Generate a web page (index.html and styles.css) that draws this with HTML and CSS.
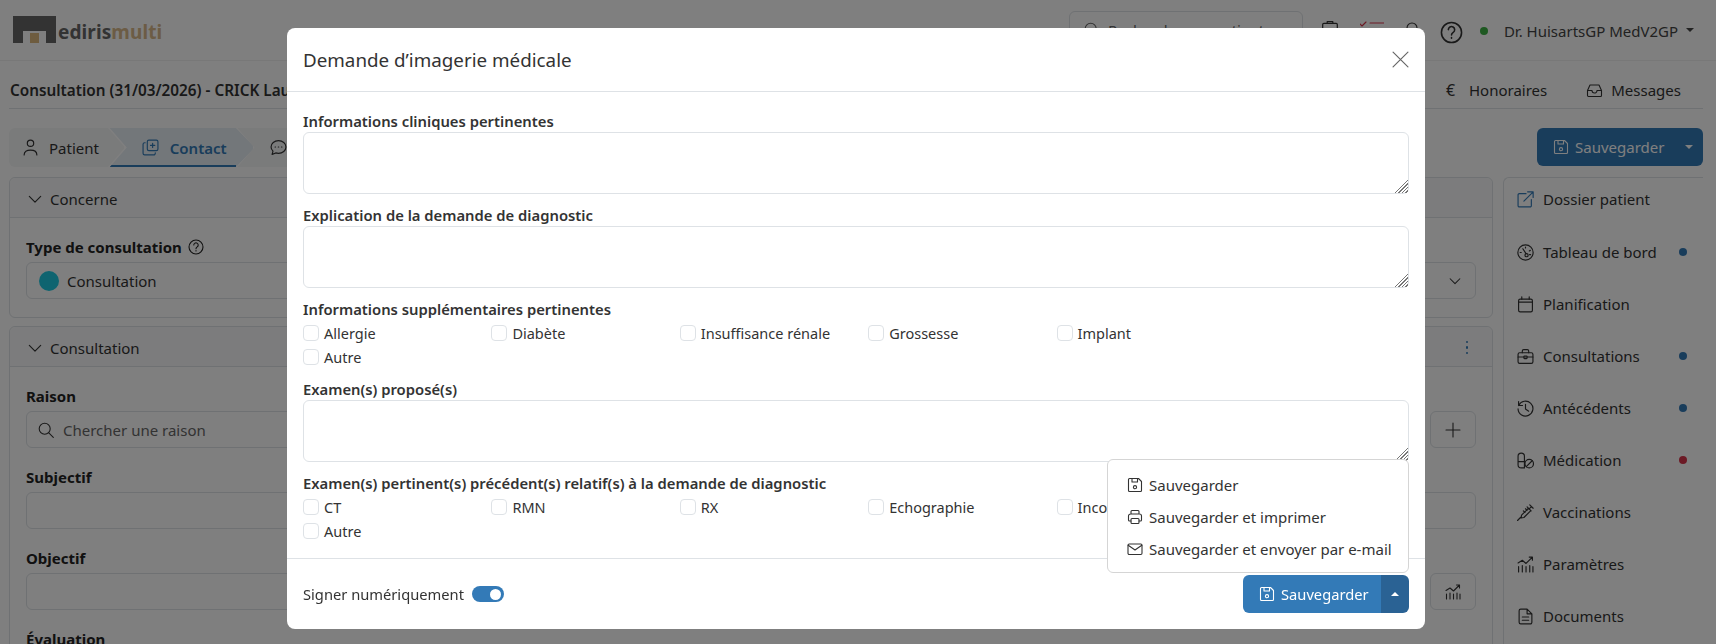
FILE: index.html
```html
<!DOCTYPE html>
<html lang="fr">
  <head>
    <meta charset="UTF-8" />
    <title>Demande d'imagerie médicale</title>
    <link rel="stylesheet" href="styles.css" />
  </head>
  <body>
    <svg class="sprite" xmlns="http://www.w3.org/2000/svg">
      <symbol id="i-save" viewBox="0 0 16 16"><path d="M2.5 1.5h9l3 3v9a1 1 0 0 1-1 1h-11a1 1 0 0 1-1-1v-11a1 1 0 0 1 1-1zM5 1.5V5h5.500V1.500"/><circle cx="8" cy="10.200" r="1.600"/></symbol>
      <symbol id="i-print" viewBox="0 0 16 16"><path d="M4 5V2.500a1 1 0 0 1 1-1h6a1 1 0 0 1 1 1V5M4 12H2.500a1 1 0 0 1-1-1V7a2 2 0 0 1 2-2h9a2 2 0 0 1 2 2v4a1 1 0 0 1-1 1H12"/><rect x="4" y="9.500" width="8" height="5" rx="1"/></symbol>
      <symbol id="i-mail" viewBox="0 0 16 16"><rect x="1" y="3" width="14" height="10.500" rx="1.200"/><path d="M1.200 4.200 8 9l6.800-4.800"/></symbol>
      <symbol id="i-person" viewBox="0 0 16 16"><circle cx="8" cy="4" r="3"/><path d="M2 15c0-3 2.500-4.600 6-4.600s6 1.600 6 4.600"/></symbol>
      <symbol id="i-contact" viewBox="0 0 16 16"><rect x="5" y="1" width="10" height="10" rx="1.500"/><path d="M3 3.500H2.500A1.500 1.500 0 0 0 1 5v8.500A1.500 1.500 0 0 0 2.500 15H11a1.500 1.500 0 0 0 1.500-1.500V13M10 4v4M8 6h4"/></symbol>
      <symbol id="i-chat" viewBox="0 0 16 16"><path d="M8 1.500c3.900 0 7 2.700 7 6s-3.100 6-7 6c-.9 0-1.800-.1-2.600-.4L2 14.500l.8-3.100C1.700 10.300 1 9 1 7.500c0-3.300 3.100-6 7-6z"/><path d="M4.800 7.500h.4M7.800 7.500h.4M10.800 7.500h.4"/></symbol>
      <symbol id="i-chev" viewBox="0 0 16 16"><path d="M1.500 5 8 11.500 14.500 5"/></symbol>
      <symbol id="i-help" viewBox="0 0 16 16"><circle cx="8" cy="8" r="7"/><path d="M5.800 6a2.200 2.200 0 1 1 3.400 1.900C8.400 8.400 8 8.800 8 9.700M8 11.500v.5"/></symbol>
      <symbol id="i-search" viewBox="0 0 16 16"><circle cx="6.700" cy="6.700" r="5.500"/><path d="m10.800 10.800 4.500 4.500"/></symbol>
      <symbol id="i-x" viewBox="0 0 16 16"><path d="m1 1 14 14M15 1 1 15"/></symbol>
      <symbol id="i-plus" viewBox="0 0 16 16"><path d="M8 1v14M1 8h14"/></symbol>
      <symbol id="i-link" viewBox="0 0 16 16"><path d="M8.500 2.500H2.200A1.200 1.200 0 0 0 1 3.700v10.100A1.200 1.200 0 0 0 2.200 15h10.100a1.200 1.200 0 0 0 1.200-1.200V8M10 .8h5.200V6M15 1 6.500 9.500"/></symbol>
      <symbol id="i-gauge" viewBox="0 0 16 16"><circle cx="8" cy="8" r="7.200"/><circle cx="9" cy="10.500" r="1.500"/><path d="M8.500 9 5.500 4.500M3 8h1M8 2.800v1M12.500 6l-.9.500M12.800 10h-1"/></symbol>
      <symbol id="i-cal" viewBox="0 0 16 16"><rect x="1.500" y="3" width="13" height="12" rx="1.500"/><path d="M1.500 5.800h13M4.500 .8V3M11.500 .8V3"/></symbol>
      <symbol id="i-case" viewBox="0 0 16 16"><rect x="1" y="4.500" width="14" height="10" rx="1.500"/><path d="M5 4.500V2.800A1.300 1.300 0 0 1 6.300 1.500h3.400A1.300 1.300 0 0 1 11 2.800v1.700M1 8.500h14"/><rect x="6.500" y="7.500" width="3" height="2.500" rx=".5"/></symbol>
      <symbol id="i-history" viewBox="0 0 16 16"><path d="M1.500 1.500v3.700h3.700M1.600 5.200a7 7 0 1 1-.6 3.200M8 4v4.500l3 2"/></symbol>
      <symbol id="i-pill" viewBox="0 0 16 16"><path d="M7 14.500V4a3 3 0 0 0-6 0v8a3 3 0 0 0 3 3h3M1 9h6"/><circle cx="11.500" cy="11" r="4"/><path d="m8.700 13.800 5.600-5.600"/></symbol>
      <symbol id="i-syringe" viewBox="0 0 16 16"><path d="m.5 15.500 3-3M12 .8l3.200 3.200M13.600 2.400l-2.400 2.400M9.500 2.700l3.800 3.800M10.800 4 4.300 10.500l-.5 2.700 2.700-.5L13 6.200M6 6.500l1.500 1.500M8 4.500 9.500 6"/></symbol>
      <symbol id="i-chart" viewBox="0 0 16 16"><path d="M1.500 15V10M5 15V9M8.500 15v-5M12 15V9M15 15v-5M1 6.500 5 4l3.500 3L14.500 1M11.500 1h3v3"/></symbol>
      <symbol id="i-doc" viewBox="0 0 16 16"><path d="M9.500 1H3.500A1.500 1.500 0 0 0 2 2.500v11A1.500 1.500 0 0 0 3.500 15h9a1.500 1.500 0 0 0 1.500-1.500V5.500zM9.500 1v4.500H14M5 8.500h6M5 11.500h6"/></symbol>
      <symbol id="i-inbox" viewBox="0 0 16 16"><path d="M1 8.500 3.500 3h9L15 8.500v5a1 1 0 0 1-1 1H2a1 1 0 0 1-1-1zM1 8.500h4.500a2.500 2.500 0 0 0 5 0H15"/></symbol>
      <symbol id="i-clip" viewBox="0 0 16 16"><rect x="1.500" y="3" width="13" height="12.500" rx="1"/><path d="M5.500 3V1.500h5V3"/></symbol>
      <symbol id="i-bell" viewBox="0 0 16 16"><path d="M3 12V7a5 5 0 0 1 10 0v5l1.500 1.500h-13zM6.500 15h3"/></symbol>
    </svg>

    <!-- page behind the modal -->
    <header class="topbar">
      <div class="logo">
        <svg class="logo-mark" viewBox="0 0 43 27"><path class="mark-dark" d="M0 0h43v27H33V15H10v12H0z"/><rect class="mark-brown" x="17" y="17" width="9" height="10"/></svg>
        <span class="logo-text">ediris<span class="logo-multi">multi</span></span>
      </div>
      <div class="top-right">
        <div class="search-top"><svg class="ic"><use href="#i-search"/></svg><span>Rechercher un patient</span></div>
        <svg class="ic top-clip"><use href="#i-clip"/></svg>
        <svg class="ic top-checks" viewBox="0 0 24 8"><path d="M0 3l2 2 4-4M10 2h14"/></svg>
        <svg class="ic top-bell"><use href="#i-bell"/></svg>
        <svg class="ic help-top"><use href="#i-help"/></svg>
        <span class="status"></span>
        <span class="user">Dr. HuisartsGP MedV2GP</span>
        <span class="caret"></span>
      </div>
    </header>

    <main class="page">
      <div class="title-row">
        <h2>Consultation (31/03/2026) - CRICK Laurence</h2>
        <div class="title-links">
          <span class="t-link"><span class="euro">€</span>Honoraires</span>
          <span class="t-link"><svg class="ic"><use href="#i-inbox"/></svg>Messages</span>
        </div>
      </div>

      <div class="tab-row">
        <div class="tabs">
          <span class="tab first-tab"><svg class="ic"><use href="#i-person"/></svg>Patient</span>
          <span class="tab active"><svg class="ic"><use href="#i-contact"/></svg>Contact</span>
          <span class="tab third"><svg class="ic"><use href="#i-chat"/></svg>Notes</span>
        </div>
        <div class="save-back">
          <span class="save-main"><svg class="ic"><use href="#i-save"/></svg>Sauvegarder</span>
          <span class="caret"></span>
        </div>
      </div>

      <div class="columns">
        <div class="left">
          <section class="panel">
            <div class="panel-head"><svg class="ic chev"><use href="#i-chev"/></svg>Concerne</div>
            <div class="panel-body first">
              <div class="lbl">Type de consultation <svg class="ic help-sm"><use href="#i-help"/></svg></div>
              <div class="box select-box"><span class="teal"></span>Consultation<svg class="ic chev end"><use href="#i-chev"/></svg></div>
            </div>
          </section>

          <section class="panel">
            <div class="panel-head"><svg class="ic chev"><use href="#i-chev"/></svg>Consultation<span class="more"><i></i><i></i><i></i></span></div>
            <div class="panel-body">
              <div class="lbl">Raison</div>
              <div class="line">
                <div class="box grow"><svg class="ic mag"><use href="#i-search"/></svg><span class="ph">Chercher une raison</span></div>
                <span class="square"><svg class="ic"><use href="#i-plus"/></svg></span>
              </div>
              <div class="lbl">Subjectif</div>
              <div class="line"><div class="box grow"></div></div>
              <div class="lbl">Objectif</div>
              <div class="line">
                <div class="box grow"></div>
                <span class="square"><svg class="ic"><use href="#i-chart"/></svg></span>
              </div>
              <div class="lbl">Évaluation</div>
            </div>
          </section>
        </div>

        <nav class="side">
          <div class="side-item"><svg class="ic link-ic"><use href="#i-link"/></svg>Dossier patient</div>
          <div class="side-item"><svg class="ic"><use href="#i-gauge"/></svg>Tableau de bord<span class="dot"></span></div>
          <div class="side-item"><svg class="ic"><use href="#i-cal"/></svg>Planification</div>
          <div class="side-item"><svg class="ic"><use href="#i-case"/></svg>Consultations<span class="dot"></span></div>
          <div class="side-item"><svg class="ic"><use href="#i-history"/></svg>Antécédents<span class="dot"></span></div>
          <div class="side-item"><svg class="ic"><use href="#i-pill"/></svg>Médication<span class="dot red"></span></div>
          <div class="side-item"><svg class="ic"><use href="#i-syringe"/></svg>Vaccinations</div>
          <div class="side-item"><svg class="ic"><use href="#i-chart"/></svg>Paramètres</div>
          <div class="side-item"><svg class="ic"><use href="#i-doc"/></svg>Documents</div>
        </nav>
      </div>
    </main>

    <!-- modal -->
    <div class="backdrop">
      <div class="modal">
        <div class="modal-head">
          <h3>Demande d’imagerie médicale</h3>
          <svg class="ic close"><use href="#i-x"/></svg>
        </div>

        <form class="modal-body">
          <label class="f-label">Informations cliniques pertinentes</label>
          <textarea></textarea>

          <label class="f-label">Explication de la demande de diagnostic</label>
          <textarea></textarea>

          <label class="f-label">Informations supplémentaires pertinentes</label>
          <div class="checks-grid">
            <label class="chk"><input type="checkbox" />Allergie</label>
            <label class="chk"><input type="checkbox" />Diabète</label>
            <label class="chk"><input type="checkbox" />Insuffisance rénale</label>
            <label class="chk"><input type="checkbox" />Grossesse</label>
            <label class="chk"><input type="checkbox" />Implant</label>
            <label class="chk"><input type="checkbox" />Autre</label>
          </div>

          <label class="f-label">Examen(s) proposé(s)</label>
          <textarea></textarea>

          <label class="f-label">Examen(s) pertinent(s) précédent(s) relatif(s) à la demande de diagnostic</label>
          <div class="checks-grid">
            <label class="chk"><input type="checkbox" />CT</label>
            <label class="chk"><input type="checkbox" />RMN</label>
            <label class="chk"><input type="checkbox" />RX</label>
            <label class="chk"><input type="checkbox" />Echographie</label>
            <label class="chk"><input type="checkbox" />Inconnu</label>
            <label class="chk"><input type="checkbox" />Autre</label>
          </div>
        </form>

        <div class="modal-foot">
          <div class="sign">Signer numériquement <span class="switch"></span></div>
          <div class="split-btn">
            <span class="split-main"><svg class="ic"><use href="#i-save"/></svg>Sauvegarder</span>
            <span class="split-toggle"><span class="caret up"></span></span>
          </div>
          <ul class="menu">
            <li><svg class="ic"><use href="#i-save"/></svg>Sauvegarder</li>
            <li><svg class="ic"><use href="#i-print"/></svg>Sauvegarder et imprimer</li>
            <li><svg class="ic"><use href="#i-mail"/></svg>Sauvegarder et envoyer par e-mail</li>
          </ul>
        </div>
      </div>
    </div>
  </body>
</html>
```

FILE: styles.css
```css
* {
  margin: 0;
  padding: 0;
  box-sizing: border-box;
}

html,
body {
  height: 100%;
  overflow: hidden;
}

body {
  background-color: #fff;
  color: #333;
  font-family: "Noto Sans", sans-serif;
  font-size: 15px;
  line-height: 22px;
}

.sprite {
  display: none;
}

.ic {
  width: 16px;
  height: 16px;
  flex: none;
  fill: none;
  stroke: currentColor;
  stroke-width: 1.1;
  stroke-linecap: round;
  stroke-linejoin: round;
}

.caret {
  width: 0;
  height: 0;
  border-left: 4px solid transparent;
  border-right: 4px solid transparent;
  border-top: 4px solid currentColor;
}

.caret.up {
  border-top: 0;
  border-bottom: 4px solid currentColor;
}

/* top bar */
.topbar {
  height: 61px;
  display: flex;
  justify-content: space-between;
  padding: 11px 22px 0 13px;
  border-bottom: 1px solid #f0f0f0;
}

.logo {
  display: flex;
  align-items: flex-end;
  height: 27px;
  margin-top: 5px;
}

.logo-mark {
  width: 43px;
  height: 27px;
}

.mark-dark {
  fill: #666;
}

.mark-brown {
  fill: #dcb87e;
}

.logo-text {
  margin-left: 2px;
  font-size: 19px;
  line-height: 22px;
  font-weight: 700;
  letter-spacing: 0.1px;
  color: #666;
}

.logo-multi {
  color: #d8b88a;
}

.top-right {
  display: flex;
  align-items: flex-start;
}

.search-top {
  width: 234px;
  height: 38px;
  display: flex;
  align-items: center;
  gap: 8px;
  padding-left: 14px;
  border: 1px solid #dee2e6;
  border-radius: 6px;
  color: #666;
}

.top-clip {
  width: 18px;
  height: 18px;
  margin: 9px 0 0 18px;
}

.top-checks {
  width: 24px;
  height: 8px;
  margin: 10px 0 0 21px;
  color: #d9344a;
}

.top-bell {
  height: 18px;
  margin: 9px 0 0 20px;
}

.help-top {
  width: 23px;
  height: 23px;
  margin: 10px 0 0 20px;
}

.status {
  width: 8px;
  height: 8px;
  margin: 16px 0 0 17px;
  border-radius: 50%;
  background-color: #3cb043;
}

.user {
  margin: 9px 0 0 16px;
  color: #444;
}

.top-right > .caret {
  margin: 17px 0 0 8px;
  color: #444;
}

/* page */
.page {
  padding: 0 13px 0 9px;
}

.title-row {
  height: 48px;
  padding-top: 11px;
  display: flex;
  align-items: center;
  justify-content: space-between;
  border-bottom: 1px solid #dee2e6;
}

.title-row h2 {
  font-size: 15.3px;
  font-weight: 600;
  padding-left: 1px;
}

.title-links {
  display: flex;
  gap: 38px;
  padding-right: 22px;
}

.t-link {
  display: flex;
  align-items: center;
  gap: 7px;
}

.t-link .ic {
  width: 19px;
}

.euro {
  width: 13px;
  margin-right: 3px;
  font-size: 16px;
}

.tab-row {
  height: 39px;
  margin-top: 19px;
  display: flex;
  justify-content: space-between;
}

.tabs {
  display: flex;
  width: 330px;
}

.tab {
  display: flex;
  align-items: center;
  gap: 10px;
  height: 39px;
  background-color: #f5f6f7;
}

.first-tab {
  position: relative;
  z-index: 1;
  width: 116px;
  padding-left: 13px;
  border-radius: 6px 0 0 6px;
  clip-path: polygon(0 0, 99px 0, 116px 50%, 99px 100%, 0 100%);
}

.tab.active {
  position: relative;
  width: 145px;
  margin-left: -14px;
  padding-left: 32px;
  gap: 11px;
  color: #337ab7;
  font-weight: 600;
  background-color: #e6eef4;
  clip-path: polygon(0 0, 126px 0, 145px 50%, 126px 100%, 0 100%, 17px 50%);
}

.tab.active::after {
  content: "";
  position: absolute;
  left: 0;
  bottom: 0;
  width: 126px;
  height: 2px;
  background-color: #337ab7;
}

.tab.third {
  flex: 1;
  margin-left: -16px;
  padding-left: 33px;
  clip-path: polygon(0 0, 100% 0, 100% 100%, 0 100%, 17px 50%);
}

.tab .ic {
  width: 17px;
  height: 17px;
}

.save-back {
  width: 166px;
  height: 38px;
  display: flex;
  align-items: center;
  justify-content: space-between;
  padding: 0 10px 0 16px;
  background-color: #337ab7;
  color: #fff;
  border-radius: 6px;
}

.save-main {
  display: flex;
  align-items: center;
  gap: 6px;
}

.columns {
  display: flex;
  gap: 10px;
  margin-top: 10px;
}

.left {
  flex: 1;
  display: flex;
  flex-direction: column;
  gap: 8px;
  min-width: 0;
}

.panel {
  border: 1px solid #dee2e6;
  border-radius: 6px;
}

.panel-head {
  height: 40px;
  display: flex;
  align-items: center;
  gap: 8px;
  padding: 2px 0 0 18px;
  background-color: #f8f9fa;
  border-bottom: 1px solid #dee2e6;
  border-radius: 6px 6px 0 0;
}

.chev {
  width: 14px;
  height: 14px;
  stroke-width: 1.3;
}

.more {
  margin-left: auto;
  margin-right: 24px;
  display: flex;
  flex-direction: column;
  gap: 3px;
}

.more i {
  width: 2.5px;
  height: 2.5px;
  border-radius: 50%;
  background-color: #337ab7;
}

.panel-body {
  padding: 19px 16px 0;
  height: 300px;
}

.panel-body.first {
  height: 99px;
}

.lbl {
  display: flex;
  align-items: flex-start;
  gap: 6px;
  height: 25px;
  line-height: 20px;
  font-weight: 700;
  color: #222;
}

.help-sm {
  margin-top: 2px;
}

.line {
  display: flex;
  gap: 5px;
  margin-bottom: 19px;
}

.box {
  height: 37px;
  display: flex;
  align-items: center;
  border: 1px solid #dee2e6;
  border-radius: 6px;
}

.grow {
  flex: 1;
}

.select-box {
  padding-left: 12px;
  gap: 8px;
}

.teal {
  width: 20px;
  height: 20px;
  border-radius: 50%;
  background-color: #1ec8e0;
}

.chev.end {
  width: 12px;
  height: 12px;
  margin-left: auto;
  margin-right: 14px;
  stroke-width: 1.4;
}

.mag {
  margin: 0 9px 0 11px;
}

.ph {
  color: #666;
}

.square {
  width: 46px;
  height: 37px;
  display: flex;
  align-items: center;
  justify-content: center;
  border: 1px solid #dee2e6;
  border-radius: 6px;
}

.side {
  width: 200px;
  border-top: 1px solid #dee2e6;
  border-left: 1px solid #dee2e6;
  border-radius: 6px 0 0 0;
  padding: 0 13px;
}

.side-item {
  height: 52px;
  display: flex;
  align-items: center;
  gap: 9px;
}

.side-item:first-child {
  height: 42px;
  margin-bottom: 6px;
}

.side-item .ic {
  width: 17px;
  height: 17px;
}

.link-ic {
  color: #337ab7;
}

.dot {
  margin-left: auto;
  margin-right: 3px;
  width: 8px;
  height: 8px;
  border-radius: 50%;
  background-color: #337ab7;
}

.dot.red {
  background-color: #d9344a;
}

/* modal */
.backdrop {
  position: fixed;
  z-index: 10;
  inset: 0;
  background-color: rgba(0, 0, 0, 0.5);
}

.modal {
  width: 1138px;
  height: 601px;
  margin: 28px 0 0 287px;
  display: flex;
  flex-direction: column;
  background-color: #fff;
  border-radius: 8px;
}

.modal-head {
  height: 64px;
  flex: none;
  display: flex;
  align-items: center;
  justify-content: space-between;
  padding: 0 16px;
  border-bottom: 1px solid #dee2e6;
}

.modal-head h3 {
  font-size: 18.8px;
  font-weight: 400;
}

.close {
  width: 17px;
  height: 17px;
  color: #666;
}

.modal-body {
  flex: 1;
  padding: 18px 16px 0;
}

.f-label {
  display: block;
  height: 22px;
  font-size: 14.8px;
  font-weight: 600;
}

textarea {
  display: block;
  width: 100%;
  height: 62px;
  margin-bottom: 10px;
  border: 1px solid #dee2e6;
  border-radius: 6px;
  outline: none;
}

textarea::-webkit-resizer {
  background:
    linear-gradient(135deg, #fff 50%, transparent 50%),
    repeating-linear-gradient(135deg, transparent 0 1.5px, #777 1.5px 2.5px);
}

.checks-grid {
  display: grid;
  grid-template-columns: repeat(5, 188.4px);
  row-gap: 2px;
  margin: 2px 0 10px;
}

.chk {
  height: 22px;
  display: flex;
  align-items: center;
  gap: 5px;
  font-size: 14.5px;
}

.chk input {
  appearance: none;
  width: 16px;
  height: 16px;
  border: 1px solid #dee2e6;
  border-radius: 4px;
}

.modal-foot {
  position: relative;
  height: 71px;
  flex: none;
  display: flex;
  align-items: center;
  justify-content: space-between;
  padding: 0 16px;
  border-top: 1px solid #dee2e6;
}

.sign {
  display: flex;
  align-items: center;
  gap: 8px;
  font-size: 14.7px;
}

.switch {
  position: relative;
  width: 32px;
  height: 16px;
  border-radius: 8px;
  background-color: #337ab7;
}

.switch::after {
  content: "";
  position: absolute;
  top: 2.5px;
  right: 2.5px;
  width: 11px;
  height: 11px;
  border-radius: 50%;
  background-color: #fff;
}

.split-btn {
  display: flex;
  height: 38px;
  color: #fff;
}

.split-main {
  width: 138px;
  display: flex;
  align-items: center;
  padding-left: 16px;
  gap: 6px;
  font-size: 14.7px;
  background-color: #337ab7;
  border-radius: 6px 0 0 6px;
}

.split-toggle {
  width: 28px;
  display: flex;
  align-items: center;
  justify-content: center;
  background-color: #2a6294;
  border-radius: 0 6px 6px 0;
}

.menu {
  position: absolute;
  right: 16px;
  bottom: 56px;
  width: 302px;
  height: 114px;
  padding: 9px 0 0 19px;
  list-style: none;
  background-color: #fff;
  border: 1px solid #d5d5d5;
  border-radius: 6px;
}

.menu li {
  height: 32px;
  display: flex;
  align-items: center;
  gap: 6px;
}
```
